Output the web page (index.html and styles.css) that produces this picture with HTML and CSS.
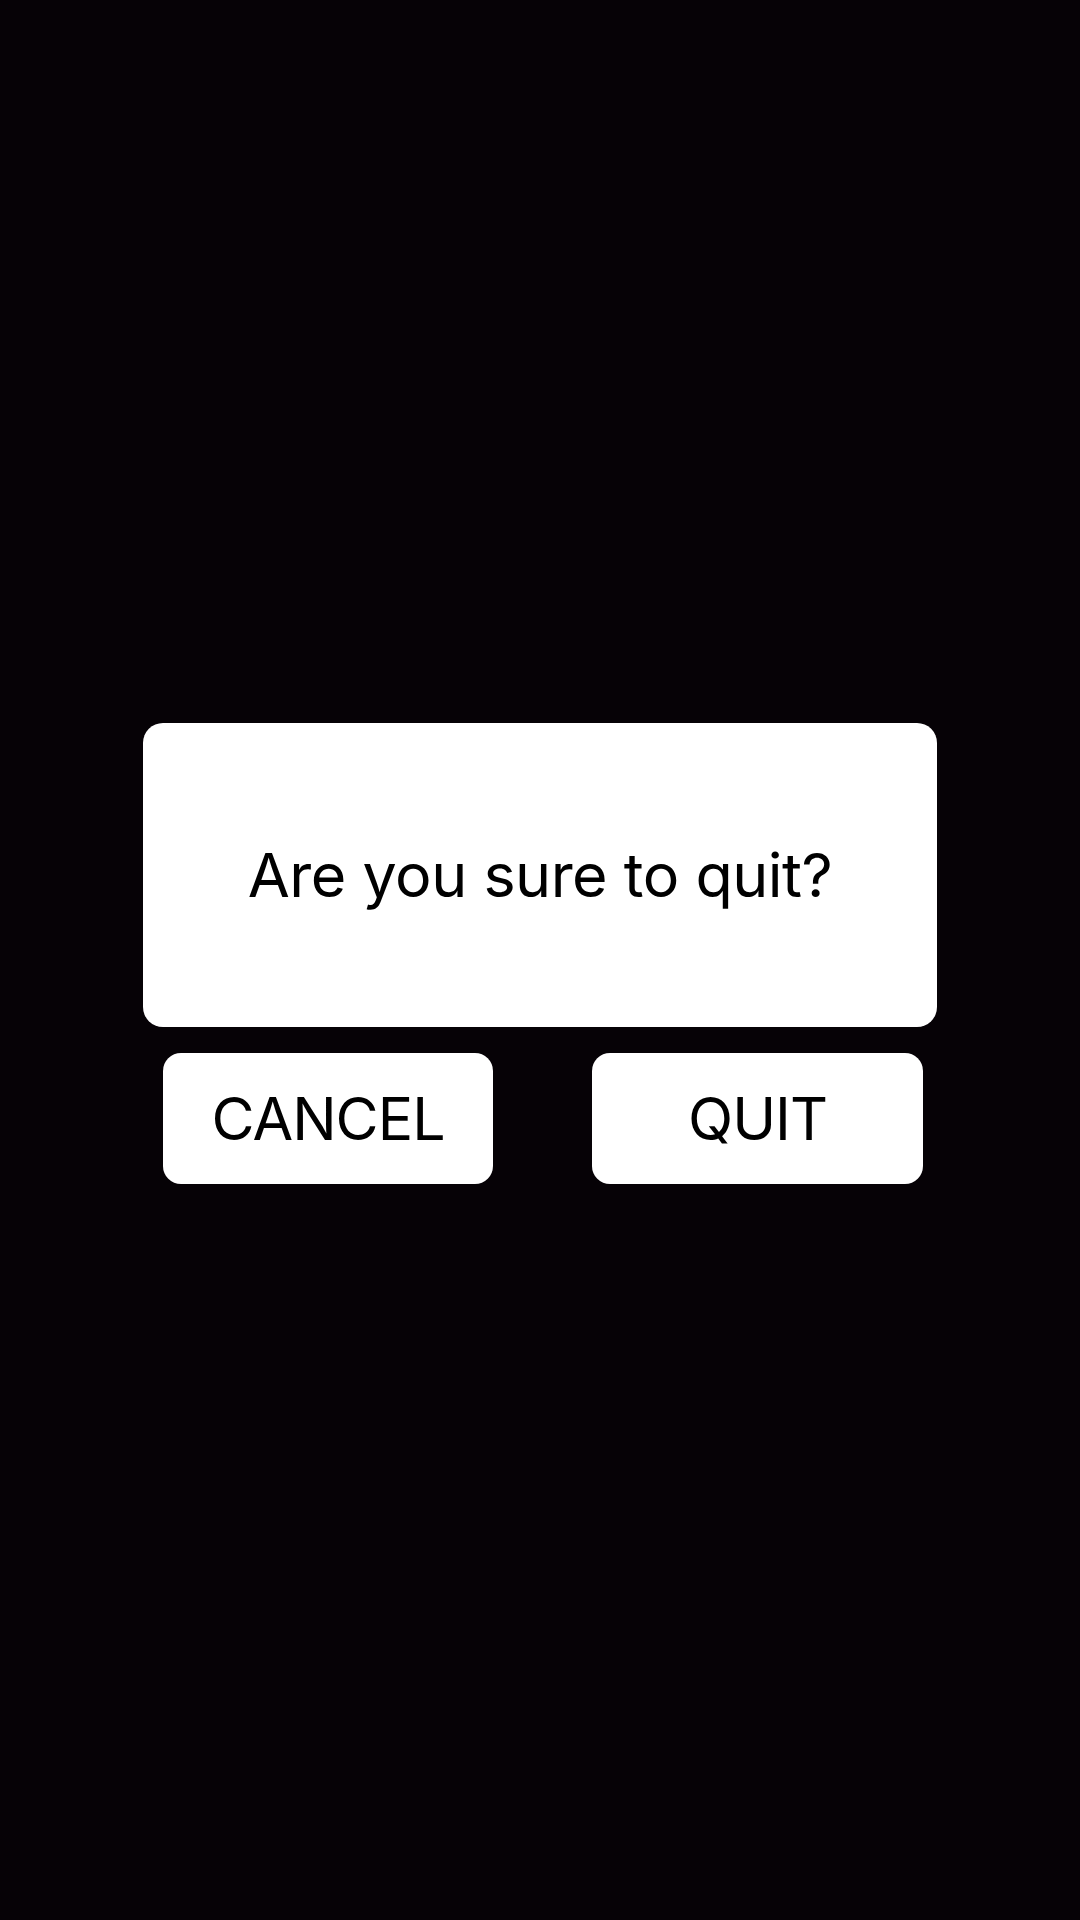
FILE: index.html
```html
<!DOCTYPE html>
<html>
<head>
<meta charset="utf-8">
<link rel="stylesheet" href="styles.css">
</head>
<body>
<div class="screen">
  <div class="dialog">
    <p class="message">Are you sure to quit?</p>
  </div>
  <div class="actions">
    <button class="btn">CANCEL</button>
    <button class="btn">QUIT</button>
  </div>
</div>
</body>
</html>
```
FILE: styles.css
```css
html, body {
  margin: 0;
  padding: 0;
  background: #060206;
}
.screen {
  width: 1080px;
  height: 1920px;
  box-sizing: border-box;
  padding-top: 723px;
  display: flex;
  flex-direction: column;
  font-family: Inter, "Noto Sans", sans-serif;
}
.dialog {
  margin-left: 143px;
  width: 794px;
  height: 304px;
  background: #fff;
  border-radius: 20px;
  display: flex;
  align-items: center;
  justify-content: center;
}
.message {
  margin: 0;
  font-size: 61px;
  letter-spacing: -0.5px;
  color: #000;
  line-height: 1;
}
.actions {
  margin-top: 26px;
  margin-left: 163px;
  display: flex;
  gap: 99px;
}
.btn {
  width: 330px;
  height: 131px;
  border: none;
  border-radius: 18px;
  background: #fff;
  color: #000;
  font-family: Inter, "Noto Sans", sans-serif;
  font-size: 59px;
  letter-spacing: -1px;
  padding: 0;
  display: flex;
  align-items: center;
  justify-content: center;
}
.btn + .btn {
  width: 331px;
}
```
